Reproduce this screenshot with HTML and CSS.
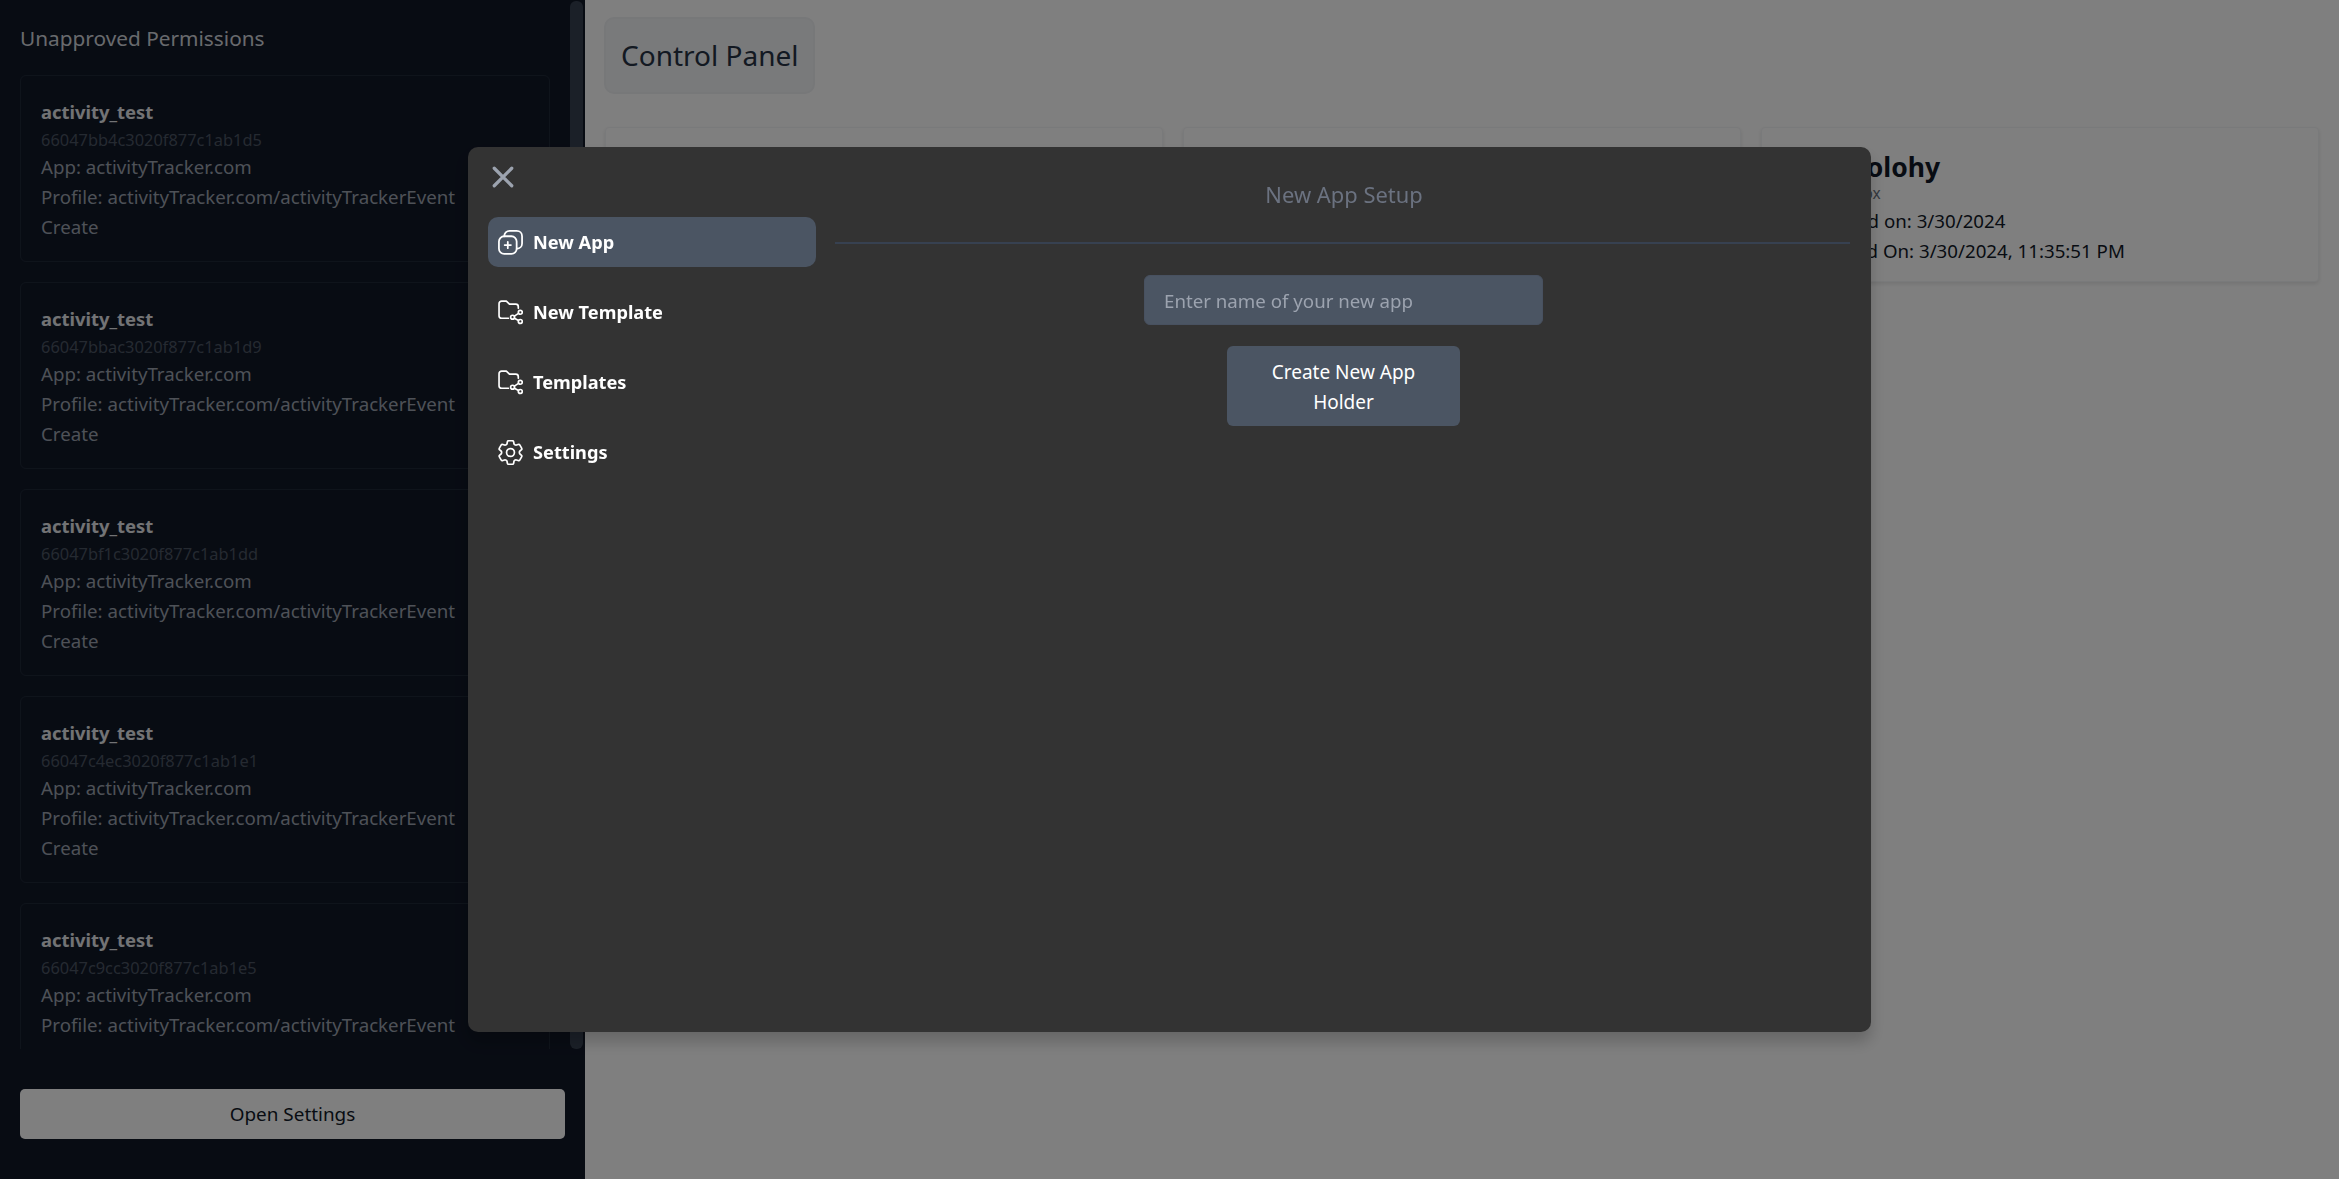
FILE: index.html
```html
<!DOCTYPE html>
<html lang="en">
<head>
  <meta charset="UTF-8" />
  <title>Control Panel</title>
  <link rel="stylesheet" href="styles.css">
</head>
<body>
  <aside class="sidebar">
    <div class="sidebar-scroll">
      <div class="perm-list">
        <h2 class="perm-title">Unapproved Permissions</h2>
        <div class="perm-card">
          <div class="perm-name">activity_test</div>
          <div class="perm-id">66047bb4c3020f877c1ab1d5</div>
          <div>App: activityTracker.com</div>
          <div>Profile: activityTracker.com/activityTrackerEvent</div>
          <div>Create</div>
        </div>
        <div class="perm-card">
          <div class="perm-name">activity_test</div>
          <div class="perm-id">66047bbac3020f877c1ab1d9</div>
          <div>App: activityTracker.com</div>
          <div>Profile: activityTracker.com/activityTrackerEvent</div>
          <div>Create</div>
        </div>
        <div class="perm-card">
          <div class="perm-name">activity_test</div>
          <div class="perm-id">66047bf1c3020f877c1ab1dd</div>
          <div>App: activityTracker.com</div>
          <div>Profile: activityTracker.com/activityTrackerEvent</div>
          <div>Create</div>
        </div>
        <div class="perm-card">
          <div class="perm-name">activity_test</div>
          <div class="perm-id">66047c4ec3020f877c1ab1e1</div>
          <div>App: activityTracker.com</div>
          <div>Profile: activityTracker.com/activityTrackerEvent</div>
          <div>Create</div>
        </div>
        <div class="perm-card">
          <div class="perm-name">activity_test</div>
          <div class="perm-id">66047c9cc3020f877c1ab1e5</div>
          <div>App: activityTracker.com</div>
          <div>Profile: activityTracker.com/activityTrackerEvent</div>
          <div>Create</div>
        </div>
      </div>
      <div class="scroll-thumb"></div>
    </div>
    <div class="sidebar-foot">
      <button class="open-settings">Open Settings</button>
    </div>
  </aside>

  <main class="main">
    <h1 class="panel-title">Control Panel</h1>
    <div class="app-grid">
      <div class="app-card"></div>
      <div class="app-card"></div>
      <div class="app-card">
        <div class="app-name">Test_polohy</div>
        <div class="app-kind">Test Sandbox</div>
        <div>Registered on: 3/30/2024</div>
        <div>Last Saved On: 3/30/2024, 11:35:51 PM</div>
      </div>
    </div>
  </main>

  <div class="overlay">
    <div class="modal">
      <div class="modal-side">
        <button class="close-btn" aria-label="Close">
          <svg viewBox="0 0 24 24" width="30" height="30" fill="none" stroke="currentColor" stroke-width="2.600" stroke-linecap="round"><path d="M5 5l14 14M19 5L5 19"/></svg>
        </button>
        <nav class="nav">
          <a class="nav-item active">
            <svg class="nav-icon" viewBox="0 0 24 24" fill="none" stroke="currentColor" stroke-width="1.700" stroke-linecap="round" stroke-linejoin="round"><rect x="0.900" y="6" width="17" height="17" rx="5"/><path d="M6 6c0-3 2.200-5.100 5.200-5.100H18c3 0 5.100 2.100 5.100 5.100v7c0 2.700-2.100 5-5.100 5"/><path d="M9.400 11.500v6M6.400 14.500h6"/></svg>
            <span>New App</span>
          </a>
          <a class="nav-item">
            <svg class="nav-icon" viewBox="0 0 24 24" fill="none" stroke="currentColor" stroke-width="1.600" stroke-linecap="round" stroke-linejoin="round"><path d="M10 17.500H3.500A2.500 2.500 0 0 1 1 15V3.500A2.500 2.500 0 0 1 3.500 1H8l3 3h6a2.500 2.500 0 0 1 2.500 2.500V8"/><circle cx="14" cy="16.500" r="1.900"/><circle cx="21.400" cy="11.800" r="1.900"/><circle cx="21.400" cy="20.600" r="1.900"/><path d="M15.700 15.500l4-2.700M15.700 17.500l4 2.200"/></svg>
            <span>New Template</span>
          </a>
          <a class="nav-item">
            <svg class="nav-icon" viewBox="0 0 24 24" fill="none" stroke="currentColor" stroke-width="1.600" stroke-linecap="round" stroke-linejoin="round"><path d="M10 17.500H3.500A2.500 2.500 0 0 1 1 15V3.500A2.500 2.500 0 0 1 3.500 1H8l3 3h6a2.500 2.500 0 0 1 2.500 2.500V8"/><circle cx="14" cy="16.500" r="1.900"/><circle cx="21.400" cy="11.800" r="1.900"/><circle cx="21.400" cy="20.600" r="1.900"/><path d="M15.700 15.500l4-2.700M15.700 17.500l4 2.200"/></svg>
            <span>Templates</span>
          </a>
          <a class="nav-item">
            <svg class="nav-icon" viewBox="2.500 2.500 19 19" fill="none" stroke="currentColor" stroke-width="1.300" stroke-linecap="round" stroke-linejoin="round"><path d="M9.594 3.940c.090-.542.560-.940 1.110-.940h2.593c.550 0 1.020.398 1.110.940l.213 1.281c.063.374.313.686.645.870.074.040.147.083.220.127.324.196.720.257 1.075.124l1.217-.456a1.125 1.125 0 0 1 1.370.490l1.296 2.247a1.125 1.125 0 0 1-.260 1.431l-1.003.827c-.293.240-.438.613-.431.992a6.759 6.759 0 0 1 0 .255c-.007.378.138.750.430.990l1.005.828c.424.350.534.954.260 1.430l-1.298 2.247a1.125 1.125 0 0 1-1.369.491l-1.217-.456c-.355-.133-.750-.072-1.076.124a6.570 6.570 0 0 1-.220.128c-.331.183-.581.495-.644.869l-.213 1.280c-.090.543-.560.941-1.110.941h-2.594c-.550 0-1.020-.398-1.110-.940l-.213-1.281c-.062-.374-.312-.686-.644-.870a6.520 6.520 0 0 1-.220-.127c-.325-.196-.720-.257-1.076-.124l-1.217.456a1.125 1.125 0 0 1-1.369-.490l-1.297-2.247a1.125 1.125 0 0 1 .260-1.431l1.004-.827c.292-.240.437-.613.430-.992a6.932 6.932 0 0 1 0-.255c.007-.378-.138-.750-.430-.990l-1.004-.828a1.125 1.125 0 0 1-.260-1.430l1.297-2.247a1.125 1.125 0 0 1 1.370-.491l1.216.456c.356.133.751.072 1.076-.124.072-.044.146-.087.220-.128.332-.183.582-.495.644-.869l.214-1.281Z"/><circle cx="12" cy="12" r="3"/></svg>
            <span>Settings</span>
          </a>
        </nav>
      </div>
      <div class="modal-body">
        <h3 class="setup-title">New App Setup</h3>
        <div class="setup-form">
          <input class="setup-input" type="text" placeholder="Enter name of your new app" />
          <button class="setup-btn">Create New App Holder</button>
        </div>
      </div>
    </div>
  </div>
</body>
</html>
```

FILE: styles.css
```css
* {
  box-sizing: border-box;
}
html, body {
  height: 100%;
}
body {
  margin: 0;
  display: flex;
  height: 1179px;
  overflow: hidden;
  background: #fff;
  color: #111827;
  font-family: "Noto Sans", sans-serif;
  font-size: 18.700px;
  line-height: 30px;
}
button, input {
  font-family: inherit;
}

/* sidebar */
.sidebar {
  width: 585px;
  flex-shrink: 0;
  display: flex;
  flex-direction: column;
  background: #111827;
  color: #9ca3af;
}
.sidebar-scroll {
  height: 1049px;
  display: flex;
  padding-right: 2px;
  overflow: hidden;
}
.perm-list {
  flex: 1;
  padding: 0 20px;
  overflow: hidden;
}
.perm-title {
  margin: 0;
  padding: 23px 0 21px;
  font-size: 20.800px;
  font-weight: 400;
  line-height: 31px;
  color: #d1d5db;
}
.perm-card {
  height: 187px;
  margin-bottom: 20px;
  padding: 21px 20px 19px;
  border: 1px solid #1f2937;
  border-radius: 6px;
}
.perm-name {
  font-size: 18.400px;
  font-weight: 700;
  color: #e5e7eb;
}
.perm-id {
  font-size: 16.400px;
  line-height: 25px;
  color: #4b5563;
}
.scroll-thumb {
  width: 13px;
  margin-top: 1px;
  border-radius: 6px;
  background: #374151;
}
.sidebar-foot {
  padding: 40px 20px 0;
}
.open-settings {
  display: block;
  width: 100%;
  height: 50px;
  border: none;
  border-radius: 5px;
  background: #fff;
  color: #111827;
  font-size: 18.900px;
}

/* main area */
.main {
  flex: 1;
  padding: 17px 20px 0 19px;
}
.panel-title {
  display: inline-block;
  margin: 0;
  padding: 18px 15px;
  border: 2px solid #eef0f3;
  border-radius: 10px;
  background: #f3f4f6;
  font-size: 28px;
  font-weight: 400;
  line-height: 37px;
  color: #273244;
}
.app-grid {
  display: grid;
  grid-template-columns: repeat(3, 1fr);
  gap: 20px;
  margin-top: 33px;
  margin-left: 1px;
}
.app-card {
  height: 155px;
  padding: 24px 20px 0 23px;
  border: 1px solid #f3f4f6;
  border-radius: 4px;
  background: #fff;
  box-shadow: 0 2px 4px rgba(0, 0, 0, 0.1);
}
.app-name {
  font-size: 26.500px;
  font-weight: 700;
  line-height: 30px;
}
.app-kind {
  font-size: 15.400px;
  line-height: 24px;
  color: #6b7280;
}

/* modal */
.overlay {
  position: fixed;
  inset: 0;
  background: rgba(0, 0, 0, 0.5);
}
.modal {
  position: absolute;
  left: 468px;
  top: 147px;
  width: 1403px;
  height: 885px;
  display: flex;
  background: #333;
  border-radius: 10px;
  box-shadow: 0 10px 15px rgba(0, 0, 0, 0.2);
}
.modal-side {
  width: 367px;
  flex-shrink: 0;
  padding: 15px 0 0 20px;
}
.close-btn {
  display: block;
  width: 30px;
  height: 30px;
  padding: 0;
  border: none;
  background: none;
  color: #9ca3af;
}
.nav {
  display: flex;
  flex-direction: column;
  gap: 20px;
  width: 328px;
  margin-top: 25px;
}
.nav-item {
  display: flex;
  align-items: center;
  gap: 10px;
  height: 50px;
  padding: 0 10px;
  border-radius: 10px;
  color: #fff;
  font-size: 18.200px;
  font-weight: 700;
}
.nav-item.active {
  background: #4b5563;
}
.nav-icon {
  width: 25px;
  height: 25px;
  flex-shrink: 0;
}
.modal-body {
  flex: 1;
  padding-right: 21px;
}
.setup-title {
  margin: 0;
  height: 97px;
  padding: 32px 0 0 3px;
  border-bottom: 2px solid #374151;
  text-align: center;
  font-size: 21.900px;
  font-weight: 400;
  line-height: 32px;
  color: #6b7280;
}
.setup-form {
  display: flex;
  flex-direction: column;
  align-items: center;
  gap: 21px;
  padding: 31px 0 0 2px;
}
.setup-input {
  width: 399px;
  height: 50px;
  padding: 0 19px;
  border: 1px solid #485160;
  border-radius: 6px;
  background: #4b5563;
  color: #fff;
  font-size: 18.700px;
}
.setup-input::placeholder {
  color: #9ca3af;
}
.setup-btn {
  width: 233px;
  height: 80px;
  padding: 11px 40px 9px;
  border: none;
  border-radius: 6px;
  background: #4b5563;
  color: #fff;
  font-size: 19px;
  line-height: 30px;
}
```
